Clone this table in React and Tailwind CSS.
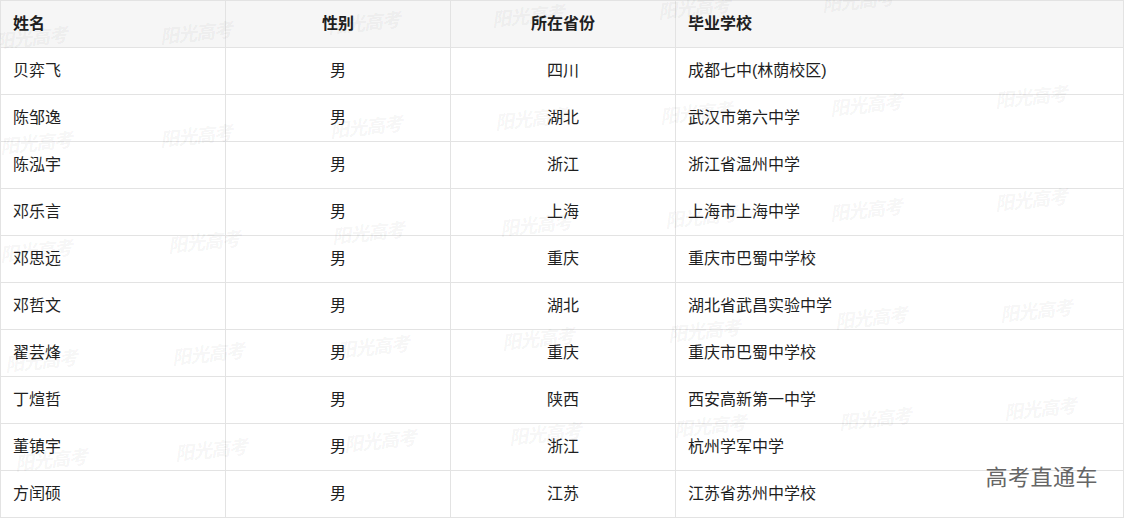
import React from 'react';

const rows = [
  ['贝弈飞', '男', '四川', '成都七中(林荫校区)'],
  ['陈邹逸', '男', '湖北', '武汉市第六中学'],
  ['陈泓宇', '男', '浙江', '浙江省温州中学'],
  ['邓乐言', '男', '上海', '上海市上海中学'],
  ['邓思远', '男', '重庆', '重庆市巴蜀中学校'],
  ['邓哲文', '男', '湖北', '湖北省武昌实验中学'],
  ['翟芸烽', '男', '重庆', '重庆市巴蜀中学校'],
  ['丁煊哲', '男', '陕西', '西安高新第一中学'],
  ['董镇宇', '男', '浙江', '杭州学军中学'],
  ['方闰硕', '男', '江苏', '江苏省苏州中学校'],
];

// watermark spots, read off the screenshot
const marks = [
  [-5, 25], [160, 20], [328, 10], [492, 3], [658, -5], [822, -12],
  [0, 130], [160, 123], [330, 114], [495, 106], [660, 100], [830, 92], [995, 84],
  [0, 238], [168, 229], [332, 220], [500, 212], [665, 204], [830, 197], [995, 187],
  [5, 348], [172, 341], [337, 334], [502, 326], [668, 318], [835, 305], [1000, 298],
  [15, 447], [175, 437], [344, 428], [509, 421], [674, 413], [839, 406], [1004, 396],
];

const App = () => {
  return (
    <div
      className="relative w-[1125px] h-[518px] overflow-hidden bg-white text-[16px] text-[#1f1f1f]"
      style={{ fontFamily: '"Liberation Sans", "Noto Sans CJK SC", sans-serif' }}
    >
      <table className="w-[1124px] border-collapse table-fixed">
        <colgroup>
          <col className="w-[225px]" />
          <col className="w-[225px]" />
          <col className="w-[225px]" />
          <col />
        </colgroup>
        <thead>
          <tr className="h-[47px] bg-[#f6f6f6]">
            <th className="border border-[#e3e3e3] pl-3 text-left font-bold">姓名</th>
            <th className="border border-[#e3e3e3] text-center font-bold">性别</th>
            <th className="border border-[#e3e3e3] text-center font-bold">所在省份</th>
            <th className="border border-[#e3e3e3] pl-3 text-left font-bold">毕业学校</th>
          </tr>
        </thead>
        <tbody>
          {rows.map((r) => (
            <tr key={r[0]} className="h-[47px]">
              <td className="border border-[#e3e3e3] pl-3 leading-none">{r[0]}</td>
              <td className="border border-[#e3e3e3] text-center leading-none">{r[1]}</td>
              <td className="border border-[#e3e3e3] text-center leading-none">{r[2]}</td>
              <td className="border border-[#e3e3e3] pl-3 leading-none">{r[3]}</td>
            </tr>
          ))}
        </tbody>
      </table>

      {marks.map(([x, y], i) => (
        <span
          key={i}
          className="pointer-events-none absolute text-[19px] font-bold italic tracking-[-1px] text-black/[0.055] -rotate-6 whitespace-nowrap"
          style={{ left: x, top: y, fontFamily: '"Liberation Serif", "Noto Sans CJK SC", serif' }}
        >
          阳光高考
        </span>
      ))}

      <span className="absolute right-[27px] top-[465px] text-[22px] leading-[26px] text-[#666] tracking-[0.5px]">
        高考直通车
      </span>
    </div>
  );
};

export default App;
